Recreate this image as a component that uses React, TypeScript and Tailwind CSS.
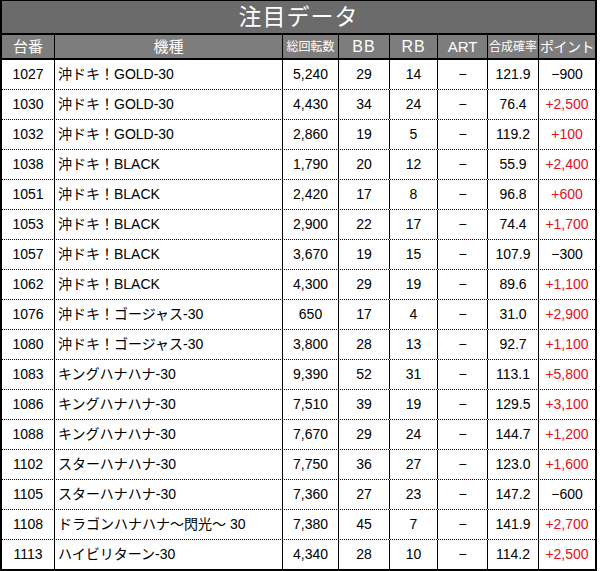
const rows: [string, string, string, string, string, string, string][] = [
  ["1027", "沖ドキ！GOLD-30", "5,240", "29", "14", "121.9", "-900"],
  ["1030", "沖ドキ！GOLD-30", "4,430", "34", "24", "76.4", "+2,500"],
  ["1032", "沖ドキ！GOLD-30", "2,860", "19", "5", "119.2", "+100"],
  ["1038", "沖ドキ！BLACK", "1,790", "20", "12", "55.9", "+2,400"],
  ["1051", "沖ドキ！BLACK", "2,420", "17", "8", "96.8", "+600"],
  ["1053", "沖ドキ！BLACK", "2,900", "22", "17", "74.4", "+1,700"],
  ["1057", "沖ドキ！BLACK", "3,670", "19", "15", "107.9", "-300"],
  ["1062", "沖ドキ！BLACK", "4,300", "29", "19", "89.6", "+1,100"],
  ["1076", "沖ドキ！ゴージャス-30", "650", "17", "4", "31.0", "+2,900"],
  ["1080", "沖ドキ！ゴージャス-30", "3,800", "28", "13", "92.7", "+1,100"],
  ["1083", "キングハナハナ-30", "9,390", "52", "31", "113.1", "+5,800"],
  ["1086", "キングハナハナ-30", "7,510", "39", "19", "129.5", "+3,100"],
  ["1088", "キングハナハナ-30", "7,670", "29", "24", "144.7", "+1,200"],
  ["1102", "スターハナハナ-30", "7,750", "36", "27", "123.0", "+1,600"],
  ["1105", "スターハナハナ-30", "7,360", "27", "23", "147.2", "-600"],
  ["1108", "ドラゴンハナハナ～閃光～ 30", "7,380", "45", "7", "141.9", "+2,700"],
  ["1113", "ハイビリターン-30", "4,340", "28", "10", "114.2", "+2,500"],
];

const cols = "grid grid-cols-[52px_228px_56px_51px_48px_50px_51px_57px]";
const cell = "flex items-center justify-center border-l border-black";

export default function App() {
  return (
    <div className="w-[597px] border-x-2 border-b-2 border-t border-black bg-white text-black font-['Liberation_Sans','Noto_Sans_CJK_JP',sans-serif]">
      <div className="h-[34px] border-b-2 border-black bg-[#6b6b6b] flex items-center justify-center text-white text-[23px] tracking-[1px]">
        注目データ
      </div>
      <div className={`${cols} h-[25px] border-b-2 border-black bg-[#7d7d7d] text-white`}>
        <div className="flex items-center justify-center text-[15px]">台番</div>
        <div className={`${cell} text-[15px]`}>機種</div>
        <div className={`${cell} text-[12px]`}>総回転数</div>
        <div className={`${cell} text-[16px] tracking-[1px]`}>BB</div>
        <div className={`${cell} text-[16px] tracking-[1px]`}>RB</div>
        <div className={`${cell} text-[15px]`}>ART</div>
        <div className={`${cell} text-[12px]`}>合成確率</div>
        <div className={`${cell} text-[14px] tracking-[-0.5px]`}>ポイント</div>
      </div>
      {rows.map((r, i) => {
        const last = i === rows.length - 1;
        const plus = r[6].startsWith("+");
        return (
          <div
            key={r[0]}
            className={`${cols} text-[14px] ${last ? "h-[29px]" : "h-[30px] border-b border-dotted border-black"}`}
          >
            <div className="flex items-center justify-center">{r[0]}</div>
            <div className="flex items-center border-l border-black pl-[3px] whitespace-nowrap">{r[1]}</div>
            <div className={cell}>{r[2]}</div>
            <div className={cell}>{r[3]}</div>
            <div className={cell}>{r[4]}</div>
            <div className={cell}>−</div>
            <div className={cell}>{r[5]}</div>
            <div className={`${cell} ${plus ? "text-[#e0101c]" : ""}`}>
              {plus ? r[6] : r[6].replace("-", "−")}
            </div>
          </div>
        );
      })}
    </div>
  );
}
